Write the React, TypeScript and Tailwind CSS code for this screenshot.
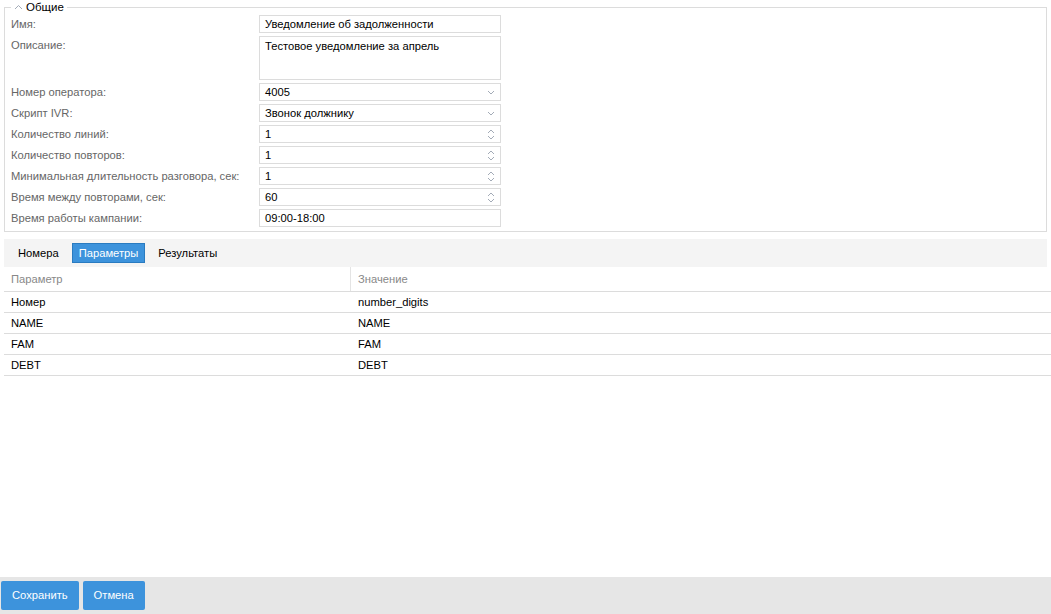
import React from 'react'

const FONT = { fontFamily: '"Liberation Sans", Arial, sans-serif' }

function ChevronDown() {
  return (
    <svg width="8" height="5" viewBox="0 0 8 5" className="text-gray-400">
      <path d="M1 1l3 3 3-3" fill="none" stroke="currentColor" strokeWidth="0.9" />
    </svg>
  )
}

function Spinner() {
  return (
    <svg width="8" height="11" viewBox="0 0 8 11" className="text-gray-400">
      <path d="M1 4l3-3 3 3" fill="none" stroke="currentColor" strokeWidth="0.9" />
      <path d="M1 7l3 3 3-3" fill="none" stroke="currentColor" strokeWidth="0.9" />
    </svg>
  )
}

type Field = { label: string; value: string; kind: 'text' | 'select' | 'number' }

const FIELDS: Field[] = [
  { label: 'Номер оператора:', value: '4005', kind: 'select' },
  { label: 'Скрипт IVR:', value: 'Звонок должнику', kind: 'select' },
  { label: 'Количество линий:', value: '1', kind: 'number' },
  { label: 'Количество повторов:', value: '1', kind: 'number' },
  { label: 'Минимальная длительность разговора, сек:', value: '1', kind: 'number' },
  { label: 'Время между повторами, сек:', value: '60', kind: 'number' },
  { label: 'Время работы кампании:', value: '09:00-18:00', kind: 'text' },
]

const PARAMS = [
  ['Номер', 'number_digits'],
  ['NAME', 'NAME'],
  ['FAM', 'FAM'],
  ['DEBT', 'DEBT'],
]

function Box({ children, right }: { children: React.ReactNode; right?: React.ReactNode }) {
  return (
    <div className="flex h-[18px] w-[242px] items-center justify-between border border-[#dcdcdc] bg-white pl-[5px] pr-[5px] text-black">
      <span>{children}</span>
      {right}
    </div>
  )
}

export default function App() {
  return (
    <div className="flex h-screen flex-col bg-white text-[11.2px]" style={FONT}>
      <div className="flex-1">
        <div className="px-[4px] pt-[7px]">
          <fieldset className="relative border border-[#dcdcdc] pb-[4px]">
            <div className="absolute -top-[8px] left-[6px] flex items-center gap-[3px] bg-white px-[3px] text-[11.5px] leading-[14px] text-black">
              <svg width="9" height="6" viewBox="0 0 9 6" className="text-gray-400">
                <path d="M1 5l3.5-3.5L8 5" fill="none" stroke="currentColor" strokeWidth="0.9" />
              </svg>
              <span>Общие</span>
            </div>
            <div className="flex flex-col gap-[3px] pl-[6px] pt-[7px]">
              <div className="flex items-center">
                <div className="w-[248px] text-[#666]">Имя:</div>
                <Box>Уведомление об задолженности</Box>
              </div>
              <div className="flex items-start">
                <div className="w-[248px] pt-[1px] text-[#666]">Описание:</div>
                <div className="h-[44px] w-[242px] border border-[#dcdcdc] px-[5px] pt-[1px] text-black">
                  Тестовое уведомление за апрель
                </div>
              </div>
              {FIELDS.map((f) => (
                <div key={f.label} className="flex items-center">
                  <div className="w-[248px] text-[#666]">{f.label}</div>
                  <Box right={f.kind === 'select' ? <ChevronDown /> : f.kind === 'number' ? <Spinner /> : null}>
                    {f.value}
                  </Box>
                </div>
              ))}
            </div>
          </fieldset>
        </div>

        <div className="mx-[4px] mt-[7px] flex h-[28px] items-center gap-[1px] bg-[#f4f4f4] pl-[8px] text-black">
          <div className="px-[6px] leading-[18px]">Номера</div>
          <div className="ml-[6px] border border-[#2a7bc0] bg-[#3d93dc] px-[6px] leading-[18px] text-white">Параметры</div>
          <div className="ml-[6px] px-[6px] leading-[18px]">Результаты</div>
        </div>

        <div className="ml-[4px]">
          <div className="flex h-[25px] items-center border-b border-[#dcdcdc] text-[#888]">
            <div className="w-[346px] pl-[7px]">Параметр</div>
            <div className="h-full border-l border-[#e4e4e4] pl-[7px] leading-[25px]">Значение</div>
          </div>
          {PARAMS.map(([k, v]) => (
            <div key={k} className="flex h-[21px] items-center border-b border-[#dcdcdc] text-black">
              <div className="w-[346px] pl-[7px]">{k}</div>
              <div className="pl-[8px]">{v}</div>
            </div>
          ))}
        </div>
      </div>

      <div className="flex h-[37px] items-center gap-[4px] bg-[#e6e6e6] pl-[1px]">
        <button className="h-[29px] rounded-[2px] bg-[#3d93dc] px-[11px] text-white">Сохранить</button>
        <button className="h-[29px] rounded-[2px] bg-[#3d93dc] px-[11px] text-white">Отмена</button>
      </div>
    </div>
  )
}
